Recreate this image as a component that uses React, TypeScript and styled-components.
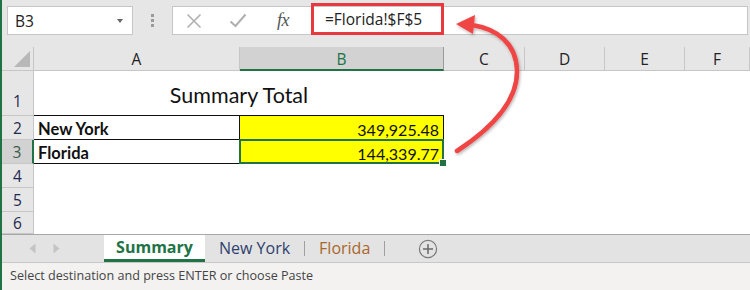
import React from "react";
import styled, { createGlobalStyle, css } from "styled-components";

const GlobalStyle = createGlobalStyle`
  * { box-sizing: border-box; }
  html, body {
    margin: 0;
    padding: 0;
    background: #ffffff;
  }
  body {
    width: 750px;
    height: 290px;
    overflow: hidden;
    font-family: "Open Sans", "Liberation Sans", sans-serif;
  }
`;

const GREEN = "#217346";

const Frame = styled.div`
  position: relative;
  width: 750px;
  height: 290px;
  border-left: 2px solid ${GREEN};
  display: flex;
  flex-direction: column;
  background: #ffffff;
  overflow: hidden;
`;

/* ---------- formula row ---------- */

const TopBar = styled.div`
  height: 47px;
  flex: none;
  display: flex;
  align-items: flex-start;
  padding: 6px 0 0 5px;
  background: #e6e6e6;
`;

const NameBox = styled.div`
  width: 126px;
  height: 29px;
  border: 1px solid #c6c6c6;
  background: #fff;
  display: flex;
  align-items: center;
  justify-content: space-between;
  padding: 0 9px 0 7px;
  font-size: 15.5px;
  color: #222;
`;

const DropArrow = styled.span`
  width: 0;
  height: 0;
  border-left: 3.5px solid transparent;
  border-right: 3.5px solid transparent;
  border-top: 4px solid #666;
`;

const Grip = styled.div`
  width: 39px;
  height: 29px;
  display: flex;
  flex-direction: column;
  align-items: center;
  justify-content: center;
  gap: 2px;
`;

const GripDot = styled.span`
  width: 3px;
  height: 3px;
  background: #9a9a9a;
`;

const FormulaBar = styled.div`
  flex: 1;
  height: 29px;
  margin-right: 2px;
  border: 1px solid #c6c6c6;
  background: #fff;
  display: flex;
  align-items: center;
`;

const IconSlot = styled.div<{ $w: number }>`
  width: ${(p) => p.$w}px;
  height: 100%;
  display: flex;
  align-items: center;
  justify-content: center;
  flex: none;
`;

const Fx = styled.span`
  font-family: "Liberation Serif", "DejaVu Serif", serif;
  font-style: italic;
  font-size: 18px;
  color: #555;
  letter-spacing: -0.5px;
`;

const Highlight = styled.div`
  align-self: flex-start;
  margin: -4px 0 0 7px;
  width: 133px;
  height: 32px;
  border: 3px solid #e8393f;
  display: flex;
  align-items: center;
  padding-left: 11px;
  font-size: 15.5px;
  color: #222;
  padding-bottom: 1px;
`;

/* ---------- sheet ---------- */

const Sheet = styled.div`
  flex: none;
  display: grid;
  grid-template-columns: 32px 206px 204px 81px 80px 80px 1fr;
  grid-template-rows: 24px 45px 24px 24px 24px 24px 22px;
  font-family: Lato, "Open Sans", sans-serif;
`;

const Corner = styled.div`
  position: relative;
  background: #e6e6e6;
  border-right: 1px solid #c6c6c6;
  border-bottom: 1px solid #c6c6c6;
  &::after {
    content: "";
    position: absolute;
    right: 3px;
    bottom: 3px;
    width: 0;
    height: 0;
    border-left: 16px solid transparent;
    border-bottom: 16px solid #b8b8b8;
  }
`;

const ColHeader = styled.div<{ $active?: boolean }>`
  display: flex;
  align-items: center;
  justify-content: center;
  font-family: "Open Sans", sans-serif;
  font-size: 15.5px;
  padding-top: 1px;
  color: #222;
  background: #e6e6e6;
  border-right: 1px solid #c6c6c6;
  border-bottom: 1px solid #c6c6c6;
  ${(p) =>
    p.$active &&
    css`
      background: #d2d2d2;
      color: ${GREEN};
      border-bottom: 2px solid ${GREEN};
      border-right-color: #9b9b9b;
    `}
`;

const RowHeader = styled.div<{ $active?: boolean; $tall?: boolean }>`
  display: flex;
  align-items: ${(p) => (p.$tall ? "flex-end" : "center")};
  justify-content: center;
  padding-bottom: ${(p) => (p.$tall ? "3px" : "0")};
  font-family: "Open Sans", sans-serif;
  font-size: 15.5px;
  color: #1e2a50;
  background: #e6e6e6;
  border-right: 1px solid #c6c6c6;
  border-bottom: 1px solid #c6c6c6;
  ${(p) =>
    p.$active &&
    css`
      background: #d2d2d2;
      color: #3a5a48;
      border-right: 2px solid ${GREEN};
    `}
`;

const TitleCell = styled.div`
  grid-column: span 2;
  display: flex;
  align-items: flex-end;
  justify-content: center;
  padding-bottom: 7px;
  font-size: 21.5px;
  color: #111;
  border-bottom: 1px solid #111;
`;

const Cell = styled.div<{
  $fill?: boolean;
  $bold?: boolean;
  $right?: boolean;
  $boxed?: boolean;
  $selected?: boolean;
}>`
  position: relative;
  display: flex;
  align-items: center;
  justify-content: ${(p) => (p.$right ? "flex-end" : "flex-start")};
  padding: 3px 4px 0 4px;
  font-size: ${(p) => (p.$bold ? "16.5px" : "16px")};
  font-weight: ${(p) => (p.$bold ? 700 : 400)};
  color: #111;
  background: ${(p) => (p.$fill ? "#ffff00" : "#fff")};
  ${(p) =>
    p.$boxed &&
    css`
      border-right: 1px solid #111;
      border-bottom: 1px solid #111;
    `}
  ${(p) =>
    p.$selected &&
    css`
      &::after {
        content: "";
        position: absolute;
        left: -1px;
        top: -1px;
        right: -1px;
        bottom: -1px;
        border: 2px solid ${GREEN};
        pointer-events: none;
      }
      &::before {
        content: "";
        position: absolute;
        right: -4px;
        bottom: -4px;
        width: 6px;
        height: 6px;
        background: ${GREEN};
        border: 1px solid #fff;
        z-index: 1;
      }
    `}
`;

/* ---------- sheet tabs ---------- */

const TabBar = styled.div`
  height: 29px;
  flex: none;
  display: flex;
  align-items: stretch;
  background: #e3e3e3;
  border-top: 1px solid #a8a8a8;
  border-bottom: 1px solid #c8c8c8;
`;

const NavArea = styled.div`
  width: 102px;
  display: flex;
  align-items: center;
  padding-left: 27px;
  gap: 17px;
`;

const SheetTab = styled.div<{ $active?: boolean; $color?: string }>`
  display: flex;
  align-items: center;
  justify-content: center;
  font-size: 16px;
  padding: 0 14px 2px 14px;
  color: ${(p) => p.$color || "#444"};
  ${(p) =>
    p.$active &&
    css`
      width: 101px;
      background: #fff;
      color: ${GREEN};
      font-weight: 700;
      border-bottom: 3px solid ${GREEN};
      padding: 0 0 0 0;
      margin-top: -1px;
      border-top: 1px solid #a8a8a8;
    `}
`;

const TabDivider = styled.span`
  width: 1px;
  height: 15px;
  align-self: center;
  background: #a0a0a0;
`;

const AddSheet = styled.div`
  width: 80px;
  display: flex;
  align-items: center;
  justify-content: center;
  padding-left: 6px;
`;

const StatusBar = styled.div`
  flex: 1;
  display: flex;
  align-items: center;
  padding: 0 0 2px 8px;
  background: #f3f2f1;
  font-size: 12.6px;
  color: #444;
`;

/* ---------- annotation ---------- */

const Annotation = styled.svg`
  position: absolute;
  left: -2px;
  top: 0;
  width: 750px;
  height: 290px;
  pointer-events: none;
`;

const NavArrow = ({ dir }: { dir: "left" | "right" }) => (
  <svg width="7" height="11" viewBox="0 0 7 11">
    {dir === "left" ? (
      <polygon points="6.5,0.5 6.5,10.5 0.5,5.5" fill="#c4c4c4" />
    ) : (
      <polygon points="0.5,0.5 0.5,10.5 6.5,5.5" fill="#c4c4c4" />
    )}
  </svg>
);

export default function App() {
  return (
    <>
      <GlobalStyle />
      <Frame>
        <TopBar>
          <NameBox>
            <span>B3</span>
            <DropArrow />
          </NameBox>
          <Grip>
            <GripDot />
            <GripDot />
            <GripDot />
          </Grip>
          <FormulaBar>
            <IconSlot $w={41}>
              <svg width="16" height="16" viewBox="0 0 16 16">
                <path d="M1.5 1.5 L14.5 14.5 M14.5 1.5 L1.5 14.5" stroke="#b0b0b0" strokeWidth="1.6" />
              </svg>
            </IconSlot>
            <IconSlot $w={48}>
              <svg width="18" height="15" viewBox="0 0 18 15">
                <path d="M1.5 8.5 L6.5 13 L16.5 1.5" stroke="#b0b0b0" strokeWidth="2" fill="none" />
              </svg>
            </IconSlot>
            <IconSlot $w={42}>
              <Fx>fx</Fx>
            </IconSlot>
            <Highlight>=Florida!$F$5</Highlight>
          </FormulaBar>
        </TopBar>

        <Sheet>
          <Corner />
          <ColHeader>A</ColHeader>
          <ColHeader $active>B</ColHeader>
          <ColHeader>C</ColHeader>
          <ColHeader>D</ColHeader>
          <ColHeader>E</ColHeader>
          <ColHeader>F</ColHeader>

          <RowHeader $tall>1</RowHeader>
          <TitleCell>Summary Total</TitleCell>
          <Cell />
          <Cell />
          <Cell />
          <Cell />

          <RowHeader>2</RowHeader>
          <Cell $bold $boxed>New York</Cell>
          <Cell $fill $right $boxed>349,925.48</Cell>
          <Cell />
          <Cell />
          <Cell />
          <Cell />

          <RowHeader $active>3</RowHeader>
          <Cell $bold $boxed>Florida</Cell>
          <Cell $fill $right $boxed $selected>144,339.77</Cell>
          <Cell />
          <Cell />
          <Cell />
          <Cell />

          {["4", "5", "6"].map((r) => (
            <React.Fragment key={r}>
              <RowHeader>{r}</RowHeader>
              <Cell />
              <Cell />
              <Cell />
              <Cell />
              <Cell />
              <Cell />
            </React.Fragment>
          ))}
        </Sheet>

        <TabBar>
          <NavArea>
            <NavArrow dir="left" />
            <NavArrow dir="right" />
          </NavArea>
          <SheetTab $active>Summary</SheetTab>
          <SheetTab $color="#2e3f6e">New York</SheetTab>
          <TabDivider />
          <SheetTab $color="#a8672a">Florida</SheetTab>
          <TabDivider />
          <AddSheet>
            <svg width="20" height="20" viewBox="0 0 20 20">
              <circle cx="10" cy="10" r="8.6" fill="none" stroke="#7a7a7a" strokeWidth="1.2" />
              <path d="M10 5 V15 M5 10 H15" stroke="#6a6a6a" strokeWidth="1.5" />
            </svg>
          </AddSheet>
        </TabBar>

        <StatusBar>Select destination and press ENTER or choose Paste</StatusBar>

        <Annotation viewBox="0 0 750 290">
          <defs>
            <filter id="shadow" x="-20%" y="-20%" width="140%" height="140%">
              <feDropShadow dx="1" dy="1.5" stdDeviation="1.5" floodColor="#000" floodOpacity="0.3" />
            </filter>
          </defs>
          <g filter="url(#shadow)">
            <path
              d="M457 151 C 492 128, 518 100, 517 70 C 516 44, 498 29, 472 25"
              stroke="#f04545"
              strokeWidth="4.5"
              fill="none"
              strokeLinecap="round"
            />
            <polygon points="456,24 475,15 473,34" fill="#f04545" />
          </g>
        </Annotation>
      </Frame>
    </>
  );
}
